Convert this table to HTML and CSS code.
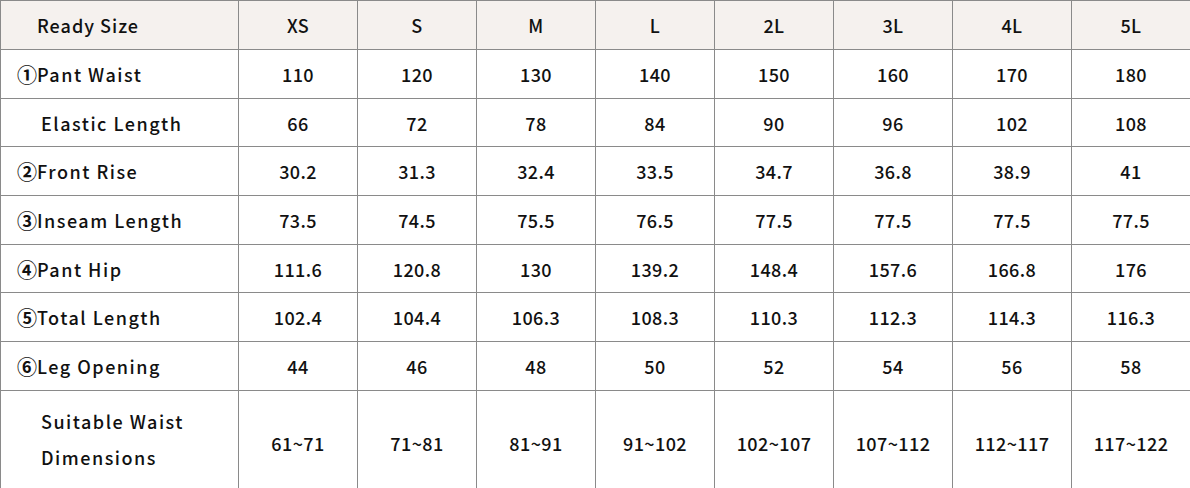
FILE: index.html
```html
<!DOCTYPE html>
<html lang="en">
<head>
<meta charset="utf-8">
<link rel="stylesheet" href="styles.css">
</head>
<body>
<table class="size-table">
  <colgroup>
    <col class="col-label">
    <col span="8" class="col-size">
  </colgroup>
  <thead>
    <tr class="head-row">
      <th class="label label-head">Ready Size</th>
      <th>XS</th><th>S</th><th>M</th><th>L</th><th>2L</th><th>3L</th><th>4L</th><th>5L</th>
    </tr>
  </thead>
  <tbody>
    <tr>
      <td class="label"><span class="num">①</span>Pant Waist</td>
      <td>110</td><td>120</td><td>130</td><td>140</td><td>150</td><td>160</td><td>170</td><td>180</td>
    </tr>
    <tr>
      <td class="label label-indent">Elastic Length</td>
      <td>66</td><td>72</td><td>78</td><td>84</td><td>90</td><td>96</td><td>102</td><td>108</td>
    </tr>
    <tr>
      <td class="label"><span class="num">②</span>Front Rise</td>
      <td>30.2</td><td>31.3</td><td>32.4</td><td>33.5</td><td>34.7</td><td>36.8</td><td>38.9</td><td>41</td>
    </tr>
    <tr>
      <td class="label"><span class="num">③</span>Inseam Length</td>
      <td>73.5</td><td>74.5</td><td>75.5</td><td>76.5</td><td>77.5</td><td>77.5</td><td>77.5</td><td>77.5</td>
    </tr>
    <tr>
      <td class="label"><span class="num">④</span>Pant Hip</td>
      <td>111.6</td><td>120.8</td><td>130</td><td>139.2</td><td>148.4</td><td>157.6</td><td>166.8</td><td>176</td>
    </tr>
    <tr>
      <td class="label"><span class="num">⑤</span>Total Length</td>
      <td>102.4</td><td>104.4</td><td>106.3</td><td>108.3</td><td>110.3</td><td>112.3</td><td>114.3</td><td>116.3</td>
    </tr>
    <tr>
      <td class="label"><span class="num">⑥</span>Leg Opening</td>
      <td>44</td><td>46</td><td>48</td><td>50</td><td>52</td><td>54</td><td>56</td><td>58</td>
    </tr>
    <tr class="tall-row">
      <td class="label label-indent label-wrap">Suitable Waist Dimensions</td>
      <td>61~71</td><td>71~81</td><td>81~91</td><td>91~102</td><td>102~107</td><td>107~112</td><td>112~117</td><td>117~122</td>
    </tr>
  </tbody>
</table>
</body>
</html>
```

FILE: styles.css
```css
html, body {
  margin: 0;
  padding: 0;
  background: #ffffff;
}

.size-table {
  width: 1190px;
  border-collapse: collapse;
  table-layout: fixed;
  font-family: "Noto Sans CJK JP", "Noto Sans", sans-serif;
  font-weight: 500;
  font-size: 18px;
  color: #111111;
}

.col-label {
  width: 238px;
}

.col-size {
  width: 119px;
}

.size-table th,
.size-table td {
  border: 1px solid #8a8a8a;
  text-align: center;
  vertical-align: middle;
  padding: 0;
  height: 47.7px;
  font-weight: 500;
  letter-spacing: 0.4px;
}

.head-row th {
  height: 48px;
  background: #f5f1ee;
}

.size-table .label {
  text-align: left;
  padding-left: 17px;
  letter-spacing: 1.5px;
  white-space: nowrap;
}

.size-table .label-head {
  padding-left: 36px;
  letter-spacing: 1px;
}

.size-table .label-indent {
  padding-left: 40px;
}

.num {
  display: inline-block;
  width: 20px;
  margin-left: -1px;
  font-size: 20px;
  font-weight: 700;
  letter-spacing: 0;
  text-align: center;
  line-height: 1;
  vertical-align: -1px;
}

.tall-row td {
  height: 96px;
}

.size-table .label-wrap {
  white-space: normal;
  padding-right: 40px;
  padding-bottom: 9px;
  line-height: 36px;
}
```
